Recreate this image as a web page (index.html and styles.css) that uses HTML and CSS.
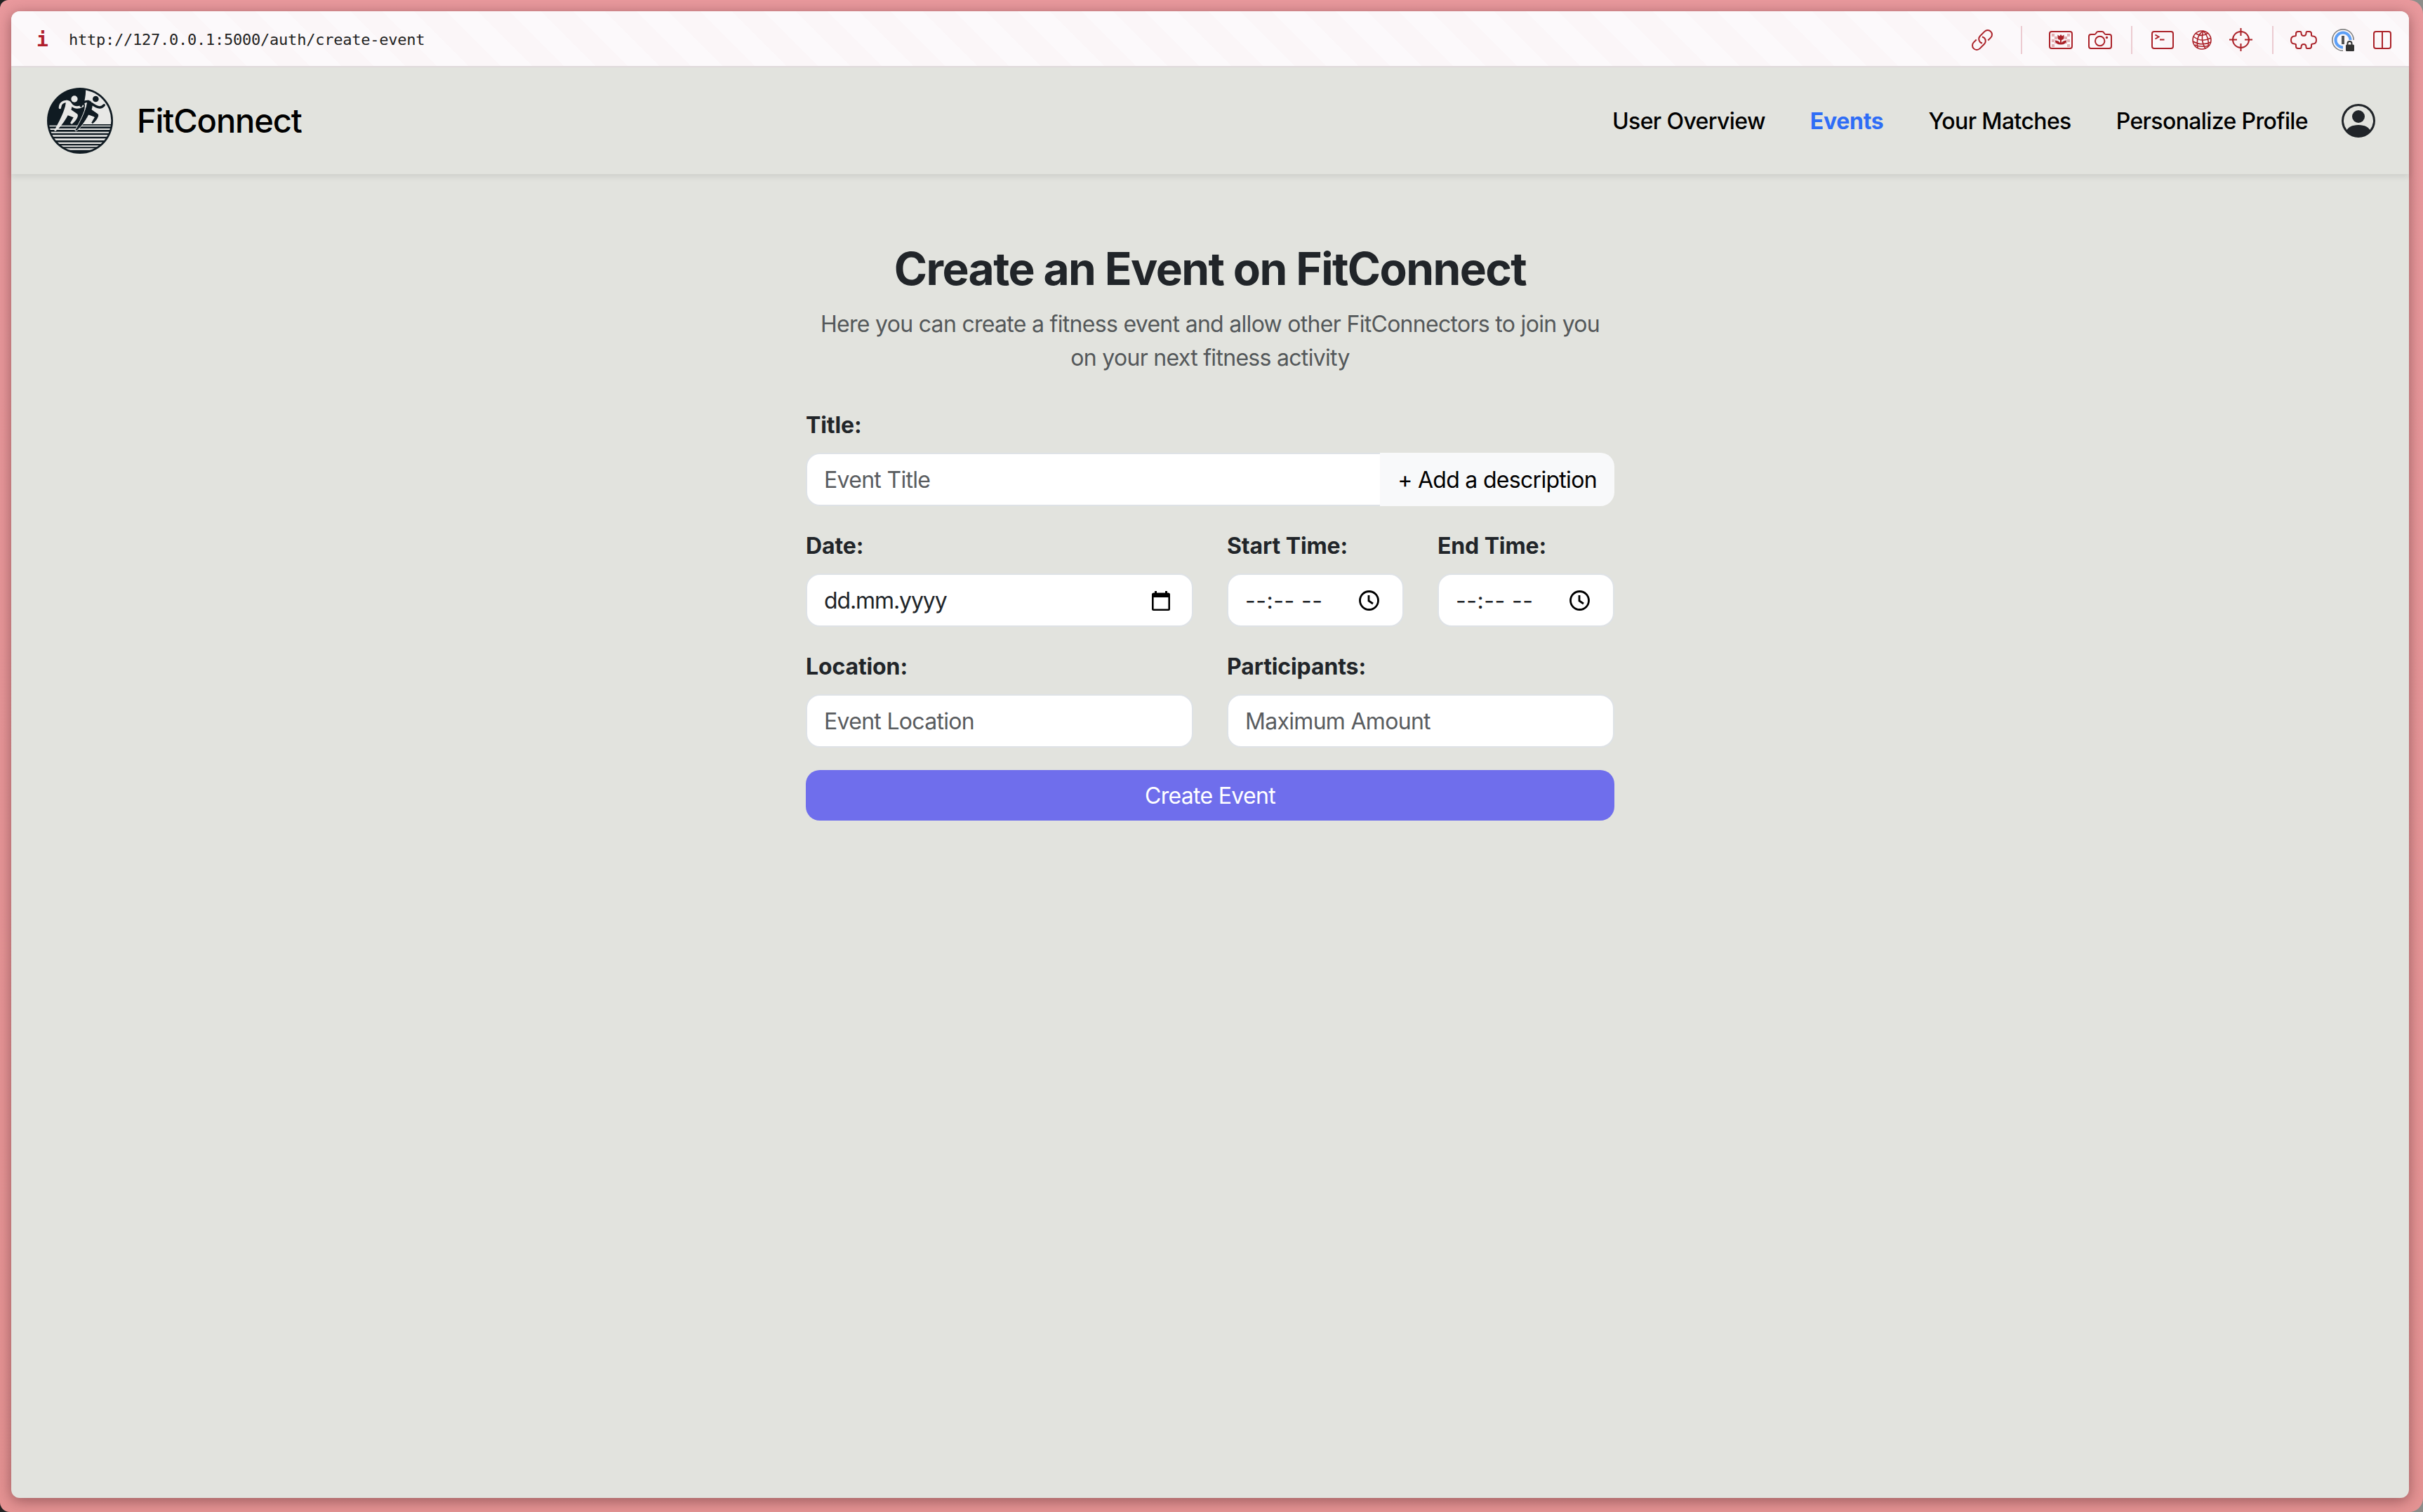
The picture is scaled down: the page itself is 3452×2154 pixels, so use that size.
FILE: index.html
```html
<!DOCTYPE html>
<html lang="en">
<head>
<meta charset="utf-8">
<title>FitConnect</title>
<link rel="stylesheet" href="styles.css">
</head>
<body>
<div class="frame">
<div class="window">
  <div class="toolbar">
    <span class="info">i</span>
    <span class="url">http://127.0.0.1:5000/auth/create-event</span>
    <div class="tools">
      <svg class="i-link" viewBox="0 0 30 30" width="30" height="30"><g transform="rotate(-45 15 15)"><path d="M9.500 8.800H4a6.200 6.200 0 0 0 0 12.400H13a6.200 6.200 0 0 0 6.200-6.200q0-1.800-1-3.300"/><path d="M20.500 21.200H26a6.200 6.200 0 0 0 0-12.400H17a6.200 6.200 0 0 0-6.200 6.200q0 1.800 1 3.300"/></g></svg>
      <i class="sep s1"></i>
      <svg class="i-image" viewBox="0 0 34 26" width="34" height="26"><g class="checks"><path d="M4 4h4v4H4zM8 8h4v4H8zM4 12h4v4H4zM8 16h4v2H8zM4 19h4v4H4zM26 4h4v4h-4zM22 8h4v4h-4zM26 12h4v4h-4zM26 19h4v4h-4zM22 16h4v2h-4z"/></g><rect x="1" y="1" width="32" height="24" rx="3"/><path class="solid" d="M12.500 5.500l2.500 2 2-2.500 2 2.500 2.500-2v4q0 3-3.500 3.500v4q2-3.500 7.500-3.500-1 6-8.500 6t-8.500-6q5.500 0 7.500 3.500v-4q-3.500-.5-3.500-3.500z"/></svg>
      <svg class="i-camera" viewBox="0 0 34 26" width="34" height="26"><path d="M4 5h5q1.500 0 2.300-1.800Q12.200 1 14 1h6q1.800 0 2.700 2.200Q23.500 5 25 5h5q3 0 3 3v14q0 3-3 3H4q-3 0-3-3V8q0-3 3-3z"/><circle cx="16.700" cy="14.500" r="6.700"/><circle class="solid" cx="26.500" cy="9.500" r="1.700"/></svg>
      <i class="sep s2"></i>
      <svg class="i-term" viewBox="0 0 32 26" width="32" height="26"><rect x="1" y="1" width="30" height="24" rx="3"/><path d="M5.500 5.500l5 3-5 3M12 12.500h6.500"/></svg>
      <svg class="i-globe" viewBox="0 0 28 28" width="28" height="28"><g class="thin"><circle cx="14" cy="14" r="13"/><path d="M16 1C8 6 6 14 8 25.500M16 1c-3 8-2 18 3 25M16 1c6 6 8 14 7 22M5 4.500q9 6 18-.5M2 9q11 9 24 2.500M1.500 16q12 7 25.500 1M4 21q10 4 20 1"/></g></svg>
      <svg class="i-cross" viewBox="0 0 33 33" width="33" height="33"><circle cx="16.500" cy="16.500" r="11.500"/><path d="M16.500 0v11M16.500 22v11M0 16.500h11M22 16.500h11"/></svg>
      <i class="sep s3"></i>
      <svg class="i-puzzle" viewBox="0 0 38 26" width="38" height="26"><path d="M8 6V4q0-3 3-3h3q1.500 0 1.500 2 0 4 3.500 4t3.500-4q0-2 1.500-2h3q3 0 3 3v2q0 1.500 2 1.500 5 0 5 5.500t-5 5.500q-2 0-2 1.500v2q0 3-3 3h-3q-1.500 0-1.500-2 0-4-3.500-4t-3.500 4q0 2-1.500 2h-3q-3 0-3-3v-2q0-1.500-2-1.500-5 0-5-5.500T6 7.500q2 0 2-1.500z"/></svg>
      <svg class="i-key" viewBox="0 0 32 32" width="32" height="32"><circle class="ring" cx="16" cy="16" r="15.200"/><circle class="blue" cx="16" cy="16" r="10.500"/><path class="gap" d="M16 16h16v16H16z"/><path class="grey" d="M14 10h4v12h-4z"/><path class="lock" d="M22.500 23v-2q0-3 3-3t3 3v2"/><rect class="dark" x="20" y="22.500" width="12" height="9.500" rx="1.500"/></svg>
      <svg class="i-panel" viewBox="0 0 26 26" width="26" height="26"><rect x="1" y="1" width="24" height="24" rx="3"/><path d="M13 1v24"/></svg>
    </div>
  </div>
  <header class="nav">
    <svg class="logo" viewBox="52 44 282 282" width="94" height="94">
      <defs><clipPath id="disc"><circle cx="193" cy="185" r="133"/></clipPath>
      <path id="runner" d="M134 97C156 97 164 115 155 138L181 156C190 164 176 186 158 200L151 195 165 171 141 162C126 190 108 216 86 231L83 226C104 190 122 152 130 122Z"/></defs>
      <circle class="ink" cx="193" cy="185" r="141"/>
      <g clip-path="url(#disc)">
        <path class="paper" d="M216 40C222 80 206 104 214 118L206 200H340V40z"/>
        <path class="paper" d="M50 205h290v5H50zM50 218h290v6H50zM50 232h290v6H50zM50 246h290v7H50zM50 261h290v8H50zM50 277h290v7H50zM50 291h290v6H50zM50 303h290v7H50z"/>
        <use class="edge" href="#runner" x="89" y="-1"/>
        <use class="paper" href="#runner"/>
        <path class="limb light" d="M107 130Q108 103 138 102M152 112Q170 138 204 122"/>
        <path class="limb" d="M197 122Q204 101 228 102M243 112Q278 140 296 118"/>
        <circle class="paper" cx="169" cy="92" r="14"/>
        <circle class="ink" cx="260" cy="92" r="13"/>
      </g>
    </svg>
    <span class="brand">FitConnect</span>
    <nav class="links">
      <a>User Overview</a><a class="active">Events</a><a>Your Matches</a><a>Personalize Profile</a>
    </nav>
    <svg class="person" viewBox="0 0 16 16" width="48" height="48"><path d="M11 6a3 3 0 1 1-6 0 3 3 0 0 1 6 0"/><path fill-rule="evenodd" d="M0 8a8 8 0 1 1 16 0A8 8 0 0 1 0 8m8-7a7 7 0 0 0-5.468 11.370C3.242 11.226 4.805 10 8 10s4.757 1.225 5.468 2.370A7 7 0 0 0 8 1"/></svg>
  </header>
  <main class="content">
    <h1>Create an Event on FitConnect</h1>
    <p class="lead">Here you can create a fitness event and allow other FitConnectors to join you<br>on your next fitness activity</p>
    <form class="form">
      <div class="field full"><label>Title:</label><div class="group"><div class="control ph">Event Title</div><button type="button" class="add">+ Add a description</button></div></div>
      <div class="field half"><label>Date:</label><div class="control date">dd.mm.yyyy<svg viewBox="0 0 26 28" width="26" height="28"><path fill-rule="evenodd" d="M4 0h3v2.500h12V0h3v2.500h1.500Q26 2.500 26 5v20.500q0 2.500-2.500 2.500h-21Q0 28 0 25.500V5q0-2.500 2.500-2.500H4zM2.600 9v16.400h20.800V9z"/></svg></div></div>
      <div class="field"><label>Start Time:</label><div class="control time">--:-- --<svg viewBox="0 0 29 29" width="29" height="29"><circle cx="14.500" cy="14.500" r="13"/><path d="M14 7v8l6 4"/></svg></div></div>
      <div class="field"><label>End Time:</label><div class="control time">--:-- --<svg viewBox="0 0 29 29" width="29" height="29"><circle cx="14.500" cy="14.500" r="13"/><path d="M14 7v8l6 4"/></svg></div></div>
      <div class="field half"><label>Location:</label><div class="control ph">Event Location</div></div>
      <div class="field half"><label>Participants:</label><div class="control ph">Maximum Amount</div></div>
      <button type="button" class="submit full">Create Event</button>
    </form>
  </main>
</div>
</div>
</body>
</html>
```
FILE: styles.css
```css
* { box-sizing: border-box; }
body { margin: 0; background: linear-gradient(90deg, #222 50%, #8d8d8a 50%); font-family: Inter, "Liberation Sans", sans-serif; font-size: 32px; line-height: 48px; letter-spacing: -.7px; color: #212529; }
.frame { height: 2154px; padding: 16px 20px 20px 16px; background: linear-gradient(#e9999d, #e59393); border-radius: 12px 20px 20px 14px; overflow: hidden; }
.window { height: 2118px; background: #e2e3de; border-radius: 12px; box-shadow: 0 4px 20px rgba(60, 20, 25, .45); display: flex; flex-direction: column; }
.toolbar { height: 80px; border-bottom: 2px solid #e2dcde; border-radius: 12px 12px 0 0; padding: 3px 25px 0 36px; display: flex; align-items: center; background: repeating-linear-gradient(45deg, #fcf9fb 0 13px, #fbf6f8 13px 45px, #fcf9fb 45px 64px); }
.info { width: 46px; font: bold 28px/40px "DejaVu Sans Mono", monospace; color: #b0202b; }
.url { font: 22px/40px "DejaVu Sans Mono", monospace; letter-spacing: -.24px; color: #222; }
.tools { margin-left: auto; display: flex; align-items: center; }
.tools svg { fill: none; stroke: #ab2229; stroke-width: 2; overflow: visible; }
.tools .solid { fill: #ab2229; stroke: none; }
.tools .checks { fill: #e3b0b4; stroke: none; }
.tools .thin { stroke-width: 1.6; }
.sep { width: 2px; height: 40px; background: #eccbd1; }
.s1 { margin-left: 40px; }
.i-image { margin-left: 38px; }
.i-camera { margin-left: 22px; }
.s2 { margin-left: 27px; }
.i-term { margin-left: 27px; }
.i-globe { margin-left: 26px; }
.i-cross { margin-left: 25px; }
.s3 { margin-left: 28px; }
.i-puzzle { margin-left: 24px; }
.i-key { margin-left: 21px; }
.i-panel { margin-left: 27px; }
.tools .ring { stroke: #858585; stroke-width: 1.7; }
.tools .blue { stroke: #5c9ff6; stroke-width: 4; }
.tools .gap { fill: #fbf7f9; stroke: none; }
.tools .grey { fill: #555; stroke: none; }
.tools .lock { stroke: #333; }
.tools .dark { fill: #333; stroke: none; }
.nav { height: 152px; padding: 0 48px 0 51px; display: flex; align-items: center; color: #000; box-shadow: 0 4px 8px rgba(0, 0, 0, .09); }
.logo .ink { fill: #101b22; }
.logo .paper { fill: #e8e8e6; }
.logo .edge { fill: #101b22; stroke: #e8e8e6; stroke-width: 3; }
.logo .limb { fill: none; stroke: #101b22; stroke-width: 10; stroke-linecap: round; }
.logo .light { stroke: #e8e8e6; }
.brand { margin-left: 34px; font-size: 47px; font-weight: 500; letter-spacing: -1.1px; }
.links { margin-left: auto; margin-right: 48px; padding-top: 2px; display: flex; gap: 64px; font-weight: 500; letter-spacing: -.62px; }
.active { color: #2f6df6; font-weight: 700; letter-spacing: -.3px; }
.person { fill: #212529; }
.content { width: 1152px; margin: 96px 0 0 1132px; text-align: center; }
h1 { margin: 0 0 17px; font-size: 64px; line-height: 77px; font-weight: 700; letter-spacing: -1.6px; }
.lead { margin: 0 0 48px; color: #54585a; white-space: nowrap; }
.form { display: grid; grid-template-columns: repeat(4, 1fr); gap: 32px 48px; text-align: left; }
.full { grid-column: span 4; }
.half { grid-column: span 2; }
label { display: block; margin-bottom: 15px; padding-top: 1px; font-weight: 700; letter-spacing: -.12px; }
.full label { padding-top: 0; }
.group { display: flex; }
.control { flex: 1; height: 76px; padding: 1px 33px 0 24px; background: #fff; border: 2px solid #dee2e6; border-radius: 20px; display: flex; align-items: center; justify-content: space-between; }
.group .control { border-right: 0; border-radius: 20px 0 0 20px; }
.ph { color: #595c5f; }
.date { padding-right: 31px; letter-spacing: -1.1px; }
.date svg { fill: #000; }
.time { letter-spacing: .5px; }
.time svg { fill: none; stroke: #000; stroke-width: 2.800; }
button { font: inherit; letter-spacing: inherit; border: 0; padding: 1px 0 0; }
.add { width: 334px; height: 76px; background: #f8f9fa; border-radius: 0 20px 20px 0; color: #000; }
.submit { height: 72px; border-radius: 20px; background: #6f6eec; color: #fff; }
```
